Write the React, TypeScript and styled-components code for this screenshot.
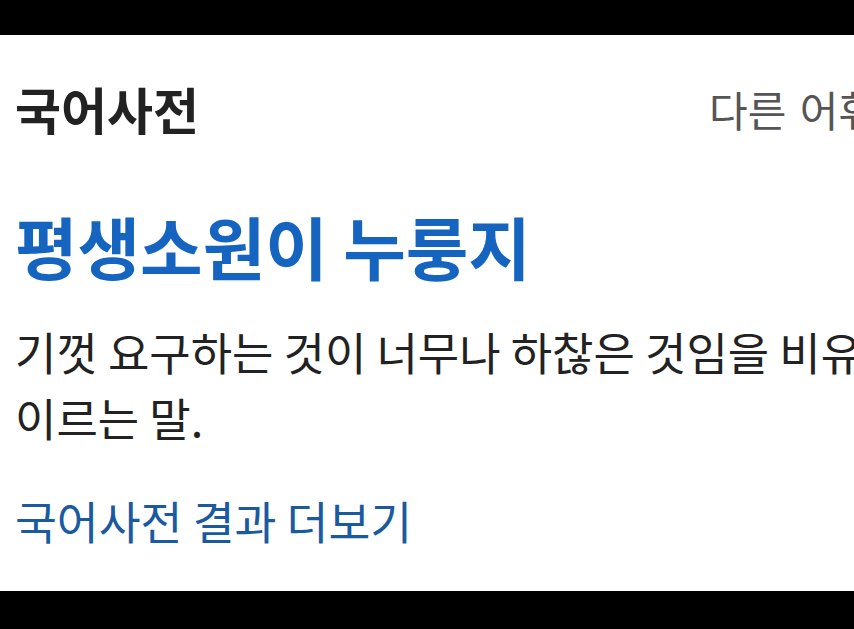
import styled, { createGlobalStyle } from "styled-components";

const GlobalStyle = createGlobalStyle`
  html, body {
    margin: 0;
    padding: 0;
    background: #000;
    overflow: hidden;
  }
  body {
    font-family: "Noto Sans CJK KR", "Noto Sans", sans-serif;
  }
`;

const Screen = styled.div`
  display: flex;
  flex-direction: column;
  height: 629px;
  width: 854px;
  overflow: hidden;
  background: #000;
`;

const TopBar = styled.div`
  height: 35px;
  flex-shrink: 0;
  background: #000;
`;

const Card = styled.section`
  width: 892px;
  box-sizing: border-box;
  height: 556px;
  flex-shrink: 0;
  background: #fff;
  padding: 46px 15px 0 15px;
  display: flex;
  flex-direction: column;
`;

const Header = styled.div`
  display: flex;
  justify-content: space-between;
  align-items: center;
  white-space: nowrap;
`;

const Heading = styled.h2`
  margin: 0;
  font-size: 50px;
  line-height: 55px;
  font-weight: 700;
  color: #222;
`;

const OtherLink = styled.a`
  font-size: 42px;
  line-height: 48px;
  color: #555;
  word-spacing: 4px;
  text-decoration: none;
`;

const Title = styled.h1`
  margin: 74px 0 0;
  font-size: 68px;
  line-height: 72px;
  font-weight: 700;
  color: #1565c0;
  white-space: nowrap;
`;

const Meaning = styled.p`
  margin: 37px 0 0;
  font-size: 45px;
  line-height: 66px;
  color: #222;
  white-space: nowrap;
`;

const MoreLink = styled.a`
  margin-top: 45px;
  font-size: 45.5px;
  line-height: 48px;
  color: #1a5a9f;
  text-decoration: none;
  white-space: nowrap;
`;

export default function App() {
  return (
    <>
      <GlobalStyle />
      <Screen>
        <TopBar />
        <Card>
          <Header>
            <Heading>국어사전</Heading>
            <OtherLink href="#">다른 어휘</OtherLink>
          </Header>
          <Title>평생소원이 누룽지</Title>
          <Meaning>
            기껏 요구하는 것이 너무나 하찮은 것임을 비유적으로
            <br />
            이르는 말.
          </Meaning>
          <MoreLink href="#">국어사전 결과 더보기</MoreLink>
        </Card>
      </Screen>
    </>
  );
}
